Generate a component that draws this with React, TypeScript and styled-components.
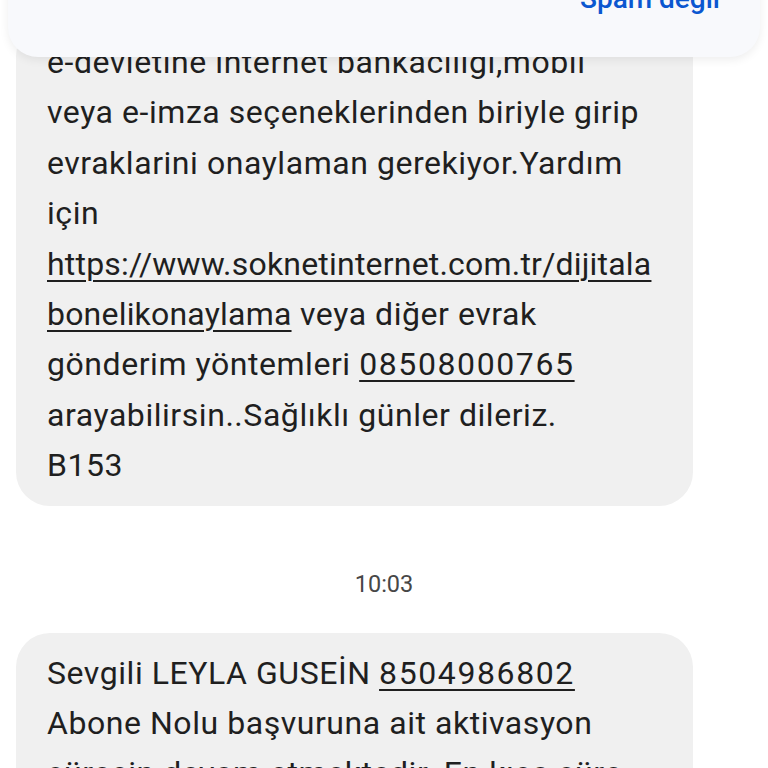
import React from "react";
import styled, { createGlobalStyle } from "styled-components";

const Global = createGlobalStyle`
  html, body {
    margin: 0;
    padding: 0;
    background: #ffffff;
  }
  body {
    font-family: Roboto, "Noto Sans", "Liberation Sans", sans-serif;
    -webkit-font-smoothing: antialiased;
  }
`;

const Screen = styled.div`
  position: relative;
  width: 768px;
  height: 768px;
  overflow: hidden;
  background: #ffffff;
`;

const ActionCard = styled.div`
  position: absolute;
  top: -60px;
  left: 8px;
  right: 8px;
  height: 117px;
  box-sizing: border-box;
  padding: 43px 40px 0 0;
  display: flex;
  justify-content: flex-end;
  align-items: flex-start;
  background: #f8f9fc;
  border-radius: 0 0 30px 30px;
  box-shadow: 0 3px 10px rgba(0, 0, 0, 0.07);
  z-index: 2;
`;

const ActionButton = styled.span`
  font-size: 28px;
  line-height: 32px;
  font-weight: 500;
  color: #0b57d0;
`;

const Thread = styled.div`
  display: flex;
  flex-direction: column;
  align-items: flex-start;
  padding-top: 22px;
`;

const Bubble = styled.div`
  box-sizing: border-box;
  width: 677px;
  margin-left: 16px;
  padding: 15px 30px 15px 31px;
  background: #f0f0f0;
  border-radius: 34px;
  color: #1f1f1f;
  font-size: 32px;
  line-height: 50.4px;
  letter-spacing: 0.55px;
  white-space: nowrap;
`;

const Link = styled.span<{ $digits?: boolean }>`
  text-decoration: underline;
  text-decoration-thickness: 2px;
  text-underline-offset: 5px;
  letter-spacing: ${(p) => (p.$digits ? "1.6px" : "0.2px")};
`;

const Timestamp = styled.div`
  align-self: center;
  margin: 64px 0 35px;
  font-size: 23.5px;
  line-height: 28px;
  color: #474747;
`;

export default function App() {
  return (
    <>
      <Global />
      <Screen>
        <ActionCard>
          <ActionButton>Spam değil</ActionButton>
        </ActionCard>
        <Thread>
          <Bubble>
            e-devletine internet bankacılığı,mobil
            <br />
            veya e-imza seçeneklerinden biriyle girip
            <br />
            evraklarini onaylaman gerekiyor.Yardım
            <br />
            için
            <br />
            <Link>https://www.soknetinternet.com.tr/dijitala</Link>
            <br />
            <Link>bonelikonaylama</Link> veya diğer evrak
            <br />
            gönderim yöntemleri <Link $digits>08508000765</Link>
            <br />
            arayabilirsin..Sağlıklı günler dileriz.
            <br />
            B153
          </Bubble>
          <Timestamp>10:03</Timestamp>
          <Bubble>
            Sevgili LEYLA GUSEİN <Link $digits>8504986802</Link>
            <br />
            Abone Nolu başvuruna ait aktivasyon
            <br />
            sürecin devam etmektedir. En kısa süre
            <br />
            içinde tamamlanacaktır.
          </Bubble>
        </Thread>
      </Screen>
    </>
  );
}
